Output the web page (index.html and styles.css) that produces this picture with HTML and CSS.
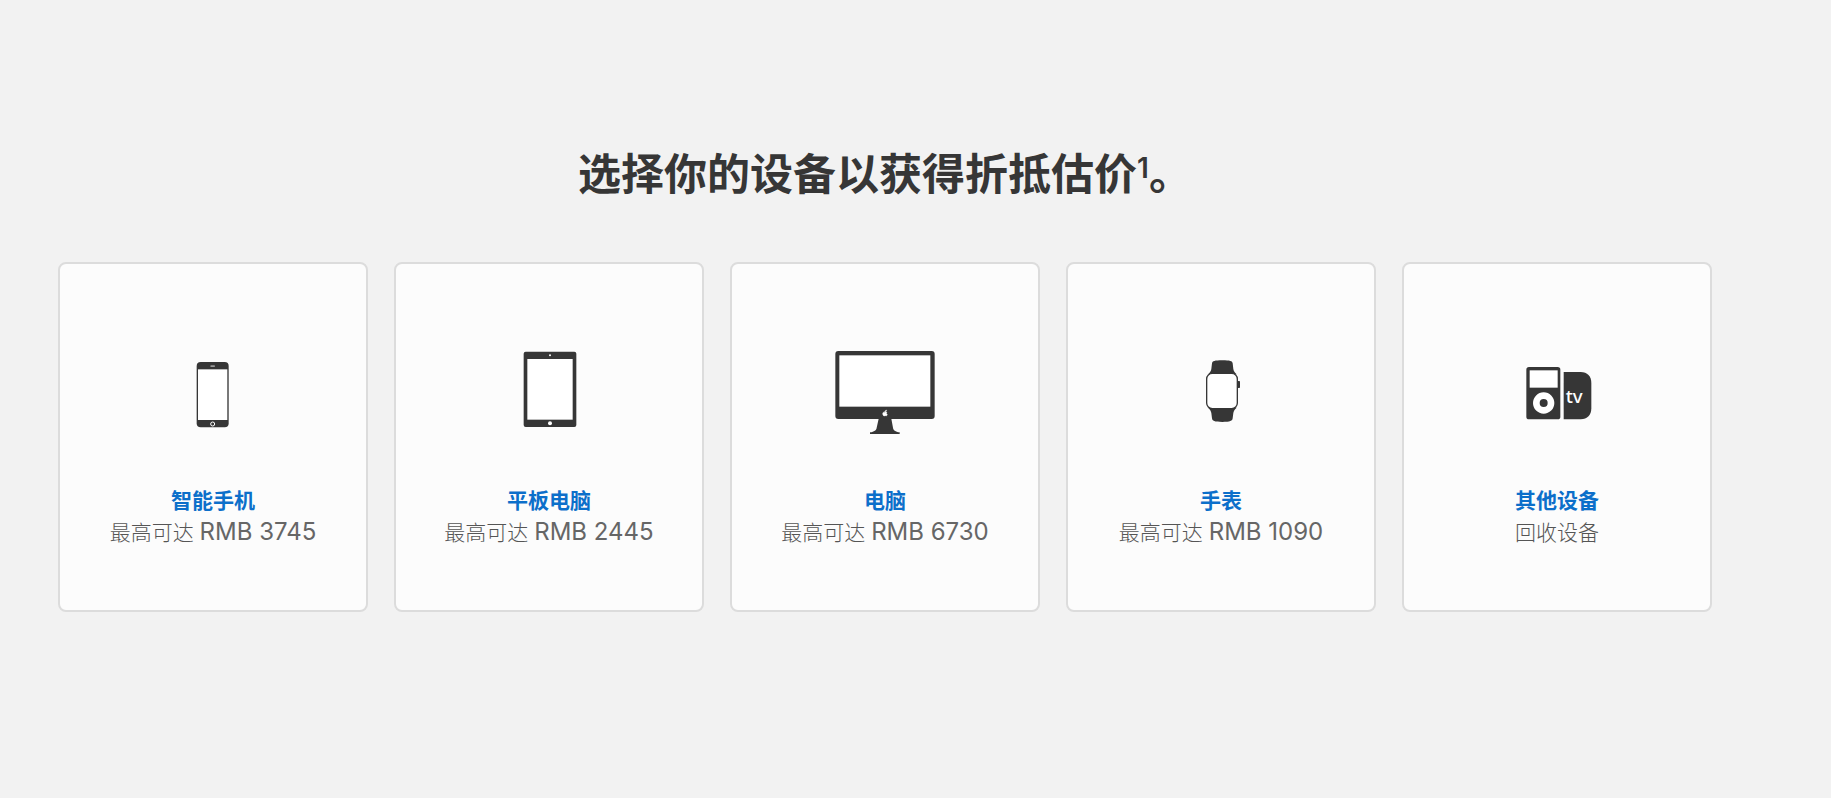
FILE: index.html
```html
<!DOCTYPE html>
<html lang="zh-CN">
<head>
    <meta charset="UTF-8">
    <meta name="viewport" content="width=device-width, initial-scale=1.0">
    <title>折抵估价</title>
    <link rel="stylesheet" href="styles.css">
</head>
<body>
    <main class="trade-in">
        <h1 class="trade-in-title">选择你的设备以获得折抵估价<sup>1</sup>。</h1>

        <div class="device-list">
            <!-- 智能手机 -->
            <div class="device-card">
                <svg class="device-icon" viewBox="-81 0 360 300" aria-hidden="true">
                    <rect x="50" y="51" width="96" height="196" rx="12" fill="#363636"/>
                    <rect x="54" y="73" width="88" height="152" fill="#fff"/>
                    <rect x="91" y="61" width="14" height="5" rx="2" fill="#999"/>
                    <circle cx="98" cy="237" r="6" fill="none" stroke="#fff" stroke-width="3"/>
                </svg>
                <a class="device-name" href="#">智能手机</a>
                <p class="device-price">最高可达 <span>RMB 3745</span></p>
            </div>

            <!-- 平板电脑 -->
            <div class="device-card">
                <svg class="device-icon" viewBox="-63 15 360 300" aria-hidden="true">
                    <rect x="41" y="35" width="158" height="226" rx="6" fill="#363636"/>
                    <rect x="52" y="57" width="136" height="182" fill="#fff"/>
                    <circle cx="120" cy="46" r="3" fill="#fff"/>
                    <circle cx="120" cy="250" r="6" fill="#fff"/>
                </svg>
                <a class="device-name" href="#">平板电脑</a>
                <p class="device-price">最高可达 <span>RMB 2445</span></p>
            </div>

            <!-- 电脑 -->
            <div class="device-card">
                <svg class="device-icon" viewBox="15 15 360 300" aria-hidden="true">
                    <rect x="46" y="33" width="298" height="204" rx="9" fill="#363636"/>
                    <rect x="58" y="46" width="273" height="154" fill="#fff"/>
                    <path d="M176 236h38l5 27c1 8 7 12 20 14v5h-89v-5c13-2 19-6 20-14z" fill="#363636"/>
                    <path d="M194 216c0-3 3-6 6-6 0 4-3 6-6 6zM201 217c-2-2-4-1-6 0-3-1-7-1-7 4 0 4 3 7 5 7l3-1 3 1c1 0 3-3 3-5-3-1-3-4-1-6z" fill="#fff" stroke="#fff"/>
                </svg>
                <a class="device-name" href="#">电脑</a>
                <p class="device-price">最高可达 <span>RMB 6730</span></p>
            </div>

            <!-- 手表 -->
            <div class="device-card">
                <svg class="device-icon" viewBox="-87 0 360 300" aria-hidden="true">
                    <path d="M54 88c6-5 9-10 10-16l2-17c1-7 8-9 31-9s30 2 31 9l2 17c1 6 4 11 10 16zM54 188c6 5 9 10 10 16l2 16c1 8 7 11 31 11s30-3 31-11l2-16c1-6 4-11 10-16z" fill="#363636"/>
                    <rect x="50" y="85" width="92" height="106" rx="17" fill="#fff" stroke="#363636" stroke-width="4"/>
                    <rect x="143" y="108" width="7" height="21" rx="2" fill="#363636"/>
                </svg>
                <a class="device-name" href="#">手表</a>
                <p class="device-price">最高可达 <span>RMB 1090</span></p>
            </div>

            <!-- 其他设备 -->
            <div class="device-card">
                <svg class="device-icon" viewBox="-39 -15 360 300" aria-hidden="true">
                    <rect x="49" y="51" width="102" height="157" rx="8" fill="#363636"/>
                    <rect x="59" y="61" width="84" height="52" fill="#fff"/>
                    <circle cx="101" cy="159" r="22" fill="none" stroke="#fff" stroke-width="20"/>
                    <path d="M161 66h51c20 0 32 13 32 32v77c0 20-12 33-32 33h-51z" fill="#363636"/>
                    <text class="tv-text" x="167" y="158">tv</text>
                </svg>
                <a class="device-name" href="#">其他设备</a>
                <p class="device-price">回收设备</p>
            </div>
        </div>
    </main>
</body>
</html>
```
FILE: styles.css
```css
body {
    margin: 0;
    background-color: #f2f2f2;
    font-family: Inter, "Noto Sans CJK SC", sans-serif;
    color: #363636;
}

.trade-in {
    padding: 142px 119px 60px 58px;
}

.trade-in-title {
    margin: 0 0 56px;
    font-size: 43px;
    font-weight: 600;
    line-height: 64px;
    text-align: center;
}

.trade-in-title sup {
    font-size: 28px;
    line-height: 1;
    vertical-align: 12px;
}

.device-list {
    display: grid;
    grid-template-columns: repeat(5, 1fr);
    gap: 26px;
}

.device-card {
    display: flex;
    flex-direction: column;
    align-items: center;
    padding: 81px 16px 61px;
    background-color: #fcfcfc;
    border: 2px solid #dcdcdc;
    border-radius: 8px;
}

.device-icon {
    width: 120px;
    height: 100px;
    margin-bottom: 40px;
}

.tv-text {
    font-family: "Noto Sans", sans-serif;
    font-size: 56px;
    font-weight: 500;
    fill: #fff;
}

.device-name {
    font-size: 21px;
    font-weight: 600;
    line-height: 32px;
    color: #0c6fca;
    text-decoration: none;
}

.device-price {
    margin: 0;
    font-size: 21px;
    font-weight: 300;
    line-height: 32px;
    color: #555;
}

.device-price span {
    font-size: 24px;
    font-weight: 400;
    line-height: 1;
    color: #666;
}
```
